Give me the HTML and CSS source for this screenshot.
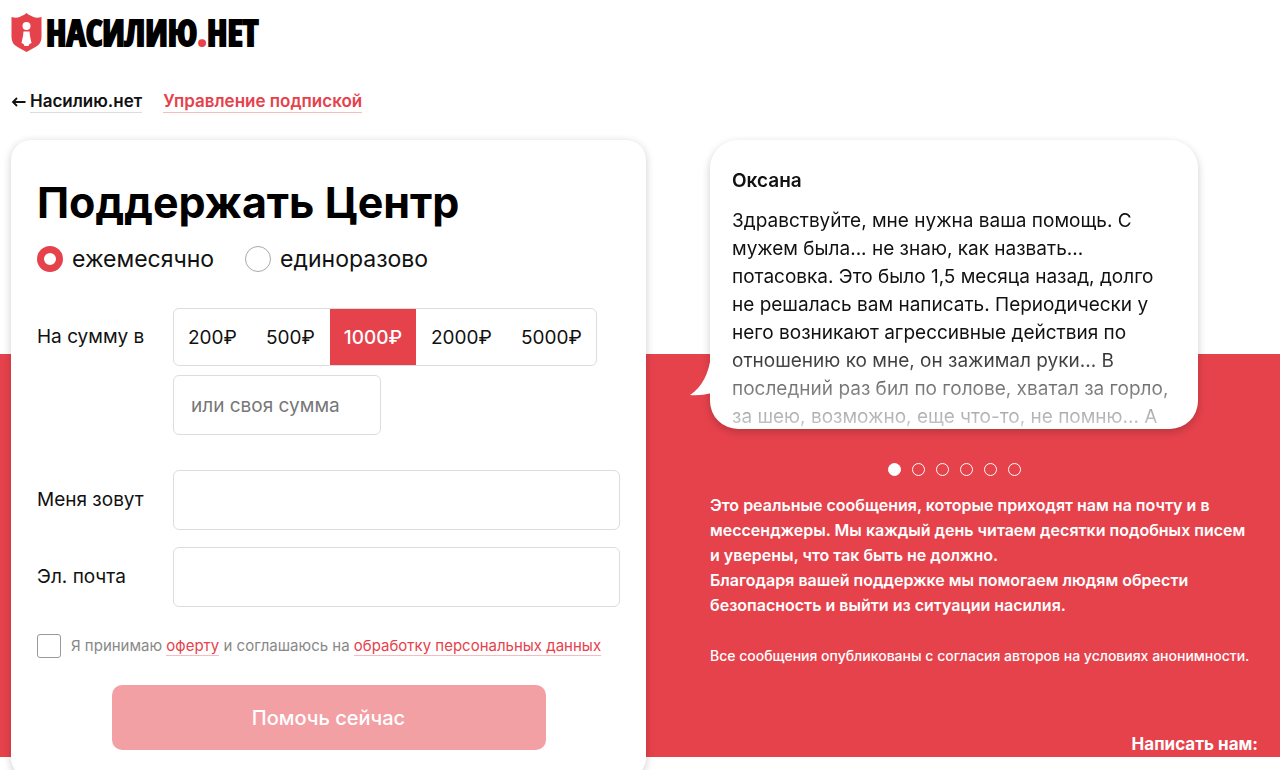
FILE: index.html
```html
<!DOCTYPE html>
<html lang="ru">
<head>
<meta charset="utf-8">
<meta name="viewport" content="width=device-width, initial-scale=1">
<title>Поддержать Центр — Насилию.нет</title>
<link rel="stylesheet" href="styles.css">
</head>
<body>
<header class="header">
  <a class="logo" href="#">
    <svg class="logo-mark" viewBox="0 0 30 40" aria-hidden="true">
      <path fill="#e6424c" d="M0 4 Q6 6 10 3 Q13 2 15 0 Q17 2 20 3 Q24 6 30 4 V24 Q30 31 24 34 L15 39 L6 34 Q0 31 0 24 Z"/>
      <circle cx="15" cy="13" r="4" fill="#fff"/>
      <path fill="#fff" d="M12 18.500 H18 L18.500 23 L20 30 L18 31 L17 33 H13 L12 31 L10 30 L11.500 23 Z"/>
    </svg>
    <span class="logo-text">НАСИЛИЮ<span class="logo-dot">.</span>НЕТ</span>
  </a>
  <nav class="nav">
    <span class="nav-back">
      <svg class="arrow" viewBox="0 0 14 10" aria-hidden="true"><path d="M5.500 1 L1.500 5 L5.500 9 M1.500 5 H14" fill="none" stroke="#111" stroke-width="1.800"/></svg>
      <a class="nav-link" href="#">Насилию.нет</a>
    </span>
    <a class="nav-link nav-link-red" href="#">Управление подпиской</a>
  </nav>
</header>
<main class="main">
  <form class="card">
    <h1 class="title">Поддержать Центр</h1>
    <div class="period">
      <label class="radio"><input class="radio-input" type="radio" name="period" checked>ежемесячно</label>
      <label class="radio"><input class="radio-input" type="radio" name="period">единоразово</label>
    </div>
    <div class="row row-amount">
      <span class="label label-amount" id="amount-label">На сумму в</span>
      <div class="amounts" role="group" aria-labelledby="amount-label">
        <div class="options">
          <button class="option" type="button">200₽</button>
          <button class="option" type="button">500₽</button>
          <button class="option option-active" type="button">1000₽</button>
          <button class="option" type="button">2000₽</button>
          <button class="option" type="button">5000₽</button>
        </div>
        <input class="field field-custom" type="text" placeholder="или своя сумма" aria-label="или своя сумма">
      </div>
    </div>
    <div class="row">
      <label class="label" for="name">Меня зовут</label>
      <input class="field" id="name" type="text">
    </div>
    <div class="row">
      <label class="label" for="email">Эл. почта</label>
      <input class="field" id="email" type="email">
    </div>
    <div class="agree">
      <input class="check" id="agree" type="checkbox">
      <label class="agree-text" for="agree">Я принимаю <a class="agree-link" href="#">оферту</a> и соглашаюсь на <a class="agree-link" href="#">обработку персональных данных</a></label>
    </div>
    <button class="submit" type="submit">Помочь сейчас</button>
  </form>
  <section class="stories">
    <article class="bubble">
      <svg class="tail" viewBox="0 0 22 42" aria-hidden="true"><path fill="#fff" d="M21 0 Q18 28 0 40 Q10 41 22 38 V0 Z"/></svg>
      <div class="bubble-body">
        <h2 class="author">Оксана</h2>
        <p class="message">Здравствуйте, мне нужна ваша помощь. С<br>мужем была... не знаю, как назвать...<br>потасовка. Это было 1,5 месяца назад, долго<br>не решалась вам написать. Периодически у<br>него возникают агрессивные действия по<br>отношению ко мне, он зажимал руки... В<br>последний раз бил по голове, хватал за горло,<br>за шею, возможно, еще что-то, не помню... А</p>
      </div>
    </article>
    <div class="dots">
      <button class="dot dot-active" type="button" aria-label="1"></button>
      <button class="dot" type="button" aria-label="2"></button>
      <button class="dot" type="button" aria-label="3"></button>
      <button class="dot" type="button" aria-label="4"></button>
      <button class="dot" type="button" aria-label="5"></button>
      <button class="dot" type="button" aria-label="6"></button>
    </div>
    <p class="about">Это реальные сообщения, которые приходят нам на почту и в<br>мессенджеры. Мы каждый день читаем десятки подобных писем<br>и уверены, что так быть не должно.<br>Благодаря вашей поддержке мы помогаем людям обрести<br>безопасность и выйти из ситуации насилия.</p>
    <p class="note">Все сообщения опубликованы с согласия авторов на условиях анонимности.</p>
    <p class="contact">Написать нам:</p>
  </section>
</main>
</body>
</html>
```
FILE: styles.css
```css
* { box-sizing: border-box; }
body {
  margin: 0;
  background: #fff;
  color: #111;
  font-family: Inter, "Open Sans", sans-serif;
}
h1, h2, p { margin: 0; }
a { text-decoration: none; }
button, input { font: inherit; color: inherit; margin: 0; }

.header { padding: 13px 11px 0; }
.logo { display: flex; align-items: center; gap: 4px; height: 40px; width: max-content; color: #000; }
.logo-mark { width: 31px; height: 40px; }
.logo-text {
  font-family: "Noto Sans ExtraCondensed", "Open Sans Condensed", "Roboto Condensed", Roboto, sans-serif;
  font-weight: 900;
  font-size: 36px;
  line-height: 40px;
  -webkit-text-stroke: 2px currentColor;
}
.logo-dot { color: #e6424c; }
.nav { display: flex; gap: 21px; margin-top: 37px; height: 23px; font-size: 17px; font-weight: 600; line-height: 22px; }
.nav-back { display: flex; align-items: center; gap: 4px; }
.arrow { width: 15px; height: 10px; }
.nav-link { color: #111; border-bottom: 1px solid #ddd; }
.nav-link-red { color: #e6424c; border-bottom-color: #f6bcc0; }

.main {
  display: grid;
  grid-template-columns: minmax(0, 635fr) minmax(0, 548fr);
  gap: 64px;
  align-items: start;
  margin-top: 27px;
  padding: 0 22px 0 11px;
  background: linear-gradient(#e6424c, #e6424c) 0 214px / 100% 403px no-repeat;
}
.card {
  padding: 36px 26px 28px;
  border-radius: 20px;
  background: #fff;
  box-shadow: 0 2px 8px rgba(0, 0, 0, .2);
}
.title { font-size: 43px; line-height: 52px; font-weight: 700; color: #000; white-space: nowrap; }
.period { display: flex; gap: 31px; margin-top: 16px; }
.radio { display: flex; align-items: center; gap: 9px; font-size: 23px; line-height: 30px; }
.radio-input {
  appearance: none;
  width: 26px;
  height: 26px;
  border: 1px solid #aaa;
  border-radius: 50%;
  background: #fff;
}
.radio-input:checked { border: 7px solid #e6424c; }

.row { display: grid; grid-template-columns: 136px 1fr; align-items: center; margin-top: 17px; }
.row-amount { margin: 34px 0 35px; align-items: start; }
.label { font-size: 19px; line-height: 28px; white-space: nowrap; }
.label-amount { padding-top: 15px; }
.amounts { display: flex; flex-direction: column; align-items: flex-start; gap: 9px; }
.options { display: flex; gap: 1px; height: 58px; border: 1px solid #ddd; border-radius: 6px; }
.option { padding: 0 14px; border: 0; background: none; font-size: 19px; white-space: nowrap; }
.option-active { background: #e6424c; color: #fff; font-weight: 500; }
.field {
  width: 100%;
  height: 60px;
  padding: 0 17px;
  border: 1px solid #ddd;
  border-radius: 6px;
  background: #fff;
  font-size: 19px;
}
.field::placeholder { color: #777; opacity: 1; }
.field-custom { width: 208px; }
.agree { display: flex; align-items: center; gap: 10px; margin-top: 27px; }
.check { appearance: none; width: 24px; height: 24px; border: 1px solid #999; border-radius: 3px; background: #fff; }
.agree-text { font-size: 15px; line-height: 20px; color: #888; white-space: nowrap; }
.agree-link { color: #e6424c; border-bottom: 1px solid #f6bcc0; }
.submit {
  display: block;
  width: 434px;
  max-width: 100%;
  height: 65px;
  margin: 27px auto 0;
  border: 0;
  border-radius: 10px;
  background: #f3a0a5;
  color: #fff;
  font-size: 20px;
  font-weight: 500;
}

.bubble { position: relative; max-width: 488px; border-radius: 28px; background: #fff; box-shadow: 0 3px 8px rgba(0, 0, 0, .2); }
.tail { position: absolute; left: -20px; bottom: 32px; width: 22px; height: 42px; }
.bubble-body { height: 289px; padding: 27px 22px 0; border-radius: 28px; overflow: hidden; -webkit-mask-image: linear-gradient(#000 200px, rgba(0, 0, 0, .2) 289px); mask-image: linear-gradient(#000 200px, rgba(0, 0, 0, .2) 289px); }
.author { font-size: 19px; line-height: 28px; font-weight: 600; }
.message { margin-top: 12px; font-size: 19px; line-height: 28px; white-space: nowrap; }
.dots { display: flex; justify-content: center; gap: 11px; max-width: 488px; margin-top: 34px; }
.dot { width: 13px; height: 13px; padding: 0; border: 1px solid #fff; border-radius: 50%; background: none; }
.dot-active { background: #fff; }
.about, .note, .contact { color: #fff; white-space: nowrap; }
.about { margin-top: 17px; font-size: 16px; line-height: 25px; font-weight: 600; }
.note { margin-top: 28px; font-size: 14px; line-height: 20px; font-weight: 500; }
.contact { margin-top: 68px; font-size: 17px; line-height: 20px; font-weight: 700; text-align: right; }
```
